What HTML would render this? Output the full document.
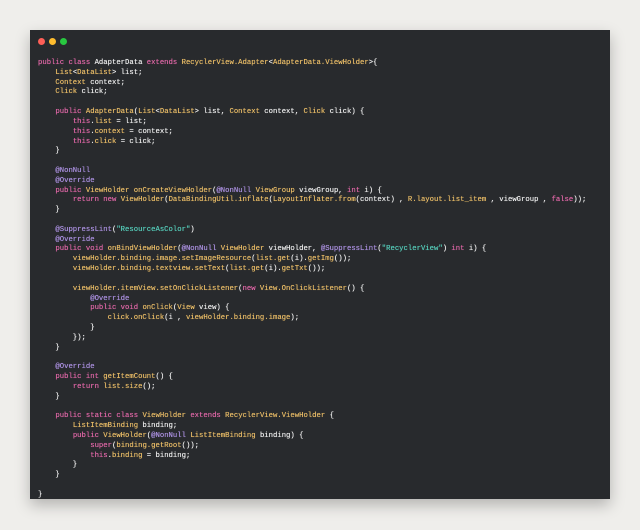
<!DOCTYPE html>
<html><head><meta charset="utf-8"><style>
html,body{margin:0;padding:0;width:640px;height:530px;background:#efeeeb;overflow:hidden}
.win{position:absolute;left:30px;top:30px;width:580px;height:469px;background:#282a2d;box-shadow:0 6px 14px rgba(0,0,0,0.25);}
.dot{position:absolute;top:8px;width:7px;height:7px;border-radius:50%}
pre{position:absolute;left:8px;top:29px;margin:0;font-family:"Liberation Mono",monospace;font-size:7.25px;line-height:9.82px;color:#ececec;white-space:pre;text-shadow:0 0 0.4px currentColor}
.k{color:#de66a5}.t{color:#e8bb66}.a{color:#ab90e0}.s{color:#55ccb9}
</style></head><body>
<div class="win">
<div class="dot" style="left:8px;background:#fe5f57"></div>
<div class="dot" style="left:19px;background:#febc2e"></div>
<div class="dot" style="left:30px;background:#28c840"></div>
<pre><span class="k">public class</span> AdapterData <span class="k">extends</span> <span class="t">RecyclerView.Adapter</span>&lt;<span class="t">AdapterData.ViewHolder</span>&gt;{
    <span class="t">List</span>&lt;<span class="t">DataList</span>&gt; list;
    <span class="t">Context</span> context;
    <span class="t">Click</span> click;

    <span class="k">public</span> <span class="t">AdapterData</span>(<span class="t">List</span>&lt;<span class="t">DataList</span>&gt; list, <span class="t">Context</span> context, <span class="t">Click</span> click) {
        <span class="k">this</span>.<span class="t">list</span> = list;
        <span class="k">this</span>.<span class="t">context</span> = context;
        <span class="k">this</span>.<span class="t">click</span> = click;
    }

    <span class="a">@NonNull</span>
    <span class="a">@Override</span>
    <span class="k">public</span> <span class="t">ViewHolder</span> <span class="t">onCreateViewHolder</span>(<span class="a">@NonNull</span> <span class="t">ViewGroup</span> viewGroup, <span class="k">int</span> i) {
        <span class="k">return new</span> <span class="t">ViewHolder</span>(<span class="t">DataBindingUtil.inflate</span>(<span class="t">LayoutInflater.from</span>(context) , <span class="t">R.layout.list_item</span> , viewGroup , <span class="k">false</span>));
    }

    <span class="a">@SuppressLint</span>(<span class="s">"ResourceAsColor"</span>)
    <span class="a">@Override</span>
    <span class="k">public void</span> <span class="t">onBindViewHolder</span>(<span class="a">@NonNull</span> <span class="t">ViewHolder</span> viewHolder, <span class="a">@SuppressLint</span>(<span class="s">"RecyclerView"</span>) <span class="k">int</span> i) {
        <span class="t">viewHolder.binding.image.setImageResource</span>(<span class="t">list.get</span>(i).<span class="t">getImg</span>());
        <span class="t">viewHolder.binding.textview.setText</span>(<span class="t">list.get</span>(i).<span class="t">getTxt</span>());

        <span class="t">viewHolder.itemView.setOnClickListener</span>(<span class="k">new</span> <span class="t">View.OnClickListener</span>() {
            <span class="a">@Override</span>
            <span class="k">public void</span> <span class="t">onClick</span>(<span class="t">View</span> view) {
                <span class="t">click.onClick</span>(i , <span class="t">viewHolder.binding.image</span>);
            }
        });
    }

    <span class="a">@Override</span>
    <span class="k">public int</span> <span class="t">getItemCount</span>() {
        <span class="k">return</span> <span class="t">list.size</span>();
    }

    <span class="k">public static class</span> <span class="t">ViewHolder</span> <span class="k">extends</span> <span class="t">RecyclerView.ViewHolder</span> {
        <span class="t">ListItemBinding</span> binding;
        <span class="k">public</span> <span class="t">ViewHolder</span>(<span class="a">@NonNull</span> <span class="t">ListItemBinding</span> binding) {
            <span class="k">super</span>(<span class="t">binding.getRoot</span>());
            <span class="k">this</span>.<span class="t">binding</span> = binding;
        }
    }

}</pre>
</div>
</body></html>
